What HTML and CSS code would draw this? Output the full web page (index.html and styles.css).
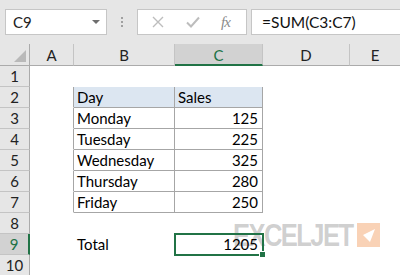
FILE: index.html
```html
<!DOCTYPE html>
<html>
<head>
<meta charset="utf-8">
<link rel="stylesheet" href="styles.css">
</head>
<body>
<div class="toolbar">
  <div class="namebox"><span class="nb-text">C9</span><span class="nb-arrow"></span></div>
  <div class="dots"><span></span><span></span><span></span></div>
  <div class="btnbox">
    <svg class="ico-x" width="12" height="12" viewBox="0 0 12 12"><path d="M1 1L11 11M11 1L1 11" stroke="#bdbdbd" stroke-width="1.4" fill="none"/></svg>
    <svg class="ico-check" width="14" height="12" viewBox="0 0 14 12"><path d="M1 6.5L5 10.5L13 1.5" stroke="#bdbdbd" stroke-width="2" fill="none"/></svg>
    <span class="fx">fx</span>
  </div>
  <div class="formula">=SUM(C3:C7)</div>
</div>
<div class="sheet">
  <div class="corner"><span class="corner-tri"></span></div>
  <div class="ch">A</div><div class="ch">B</div><div class="ch sel">C</div><div class="ch">D</div><div class="ch last">E</div>

  <div class="rh">1</div><div class="c"></div><div class="c"></div><div class="c"></div><div class="c"></div><div class="c"></div>

  <div class="rh">2</div><div class="c tb-left"></div><div class="c t hd">Day</div><div class="c t hd">Sales</div><div class="c"></div><div class="c"></div>

  <div class="rh">3</div><div class="c tb-left"></div><div class="c t">Monday</div><div class="c t num">125</div><div class="c"></div><div class="c"></div>
  <div class="rh">4</div><div class="c tb-left"></div><div class="c t">Tuesday</div><div class="c t num">225</div><div class="c"></div><div class="c"></div>
  <div class="rh">5</div><div class="c tb-left"></div><div class="c t">Wednesday</div><div class="c t num">325</div><div class="c"></div><div class="c"></div>
  <div class="rh">6</div><div class="c tb-left"></div><div class="c t">Thursday</div><div class="c t num">280</div><div class="c"></div><div class="c"></div>
  <div class="rh">7</div><div class="c tb-left"></div><div class="c t">Friday</div><div class="c t num">250</div><div class="c"></div><div class="c"></div>

  <div class="rh">8</div><div class="c"></div><div class="c"></div><div class="c"></div><div class="c"></div><div class="c"></div>

  <div class="rh sel">9</div><div class="c"></div><div class="c">Total</div><div class="c num active">1205<span class="handle"></span></div><div class="c"></div><div class="c"></div>

  <div class="rh">10</div><div class="c"></div><div class="c"></div><div class="c"></div><div class="c"></div><div class="c"></div>

  <div class="watermark"><span class="wm-text">EXCELJET</span><svg class="wm-logo" width="23" height="24" viewBox="0 0 23 24"><rect width="23" height="24" fill="#f9d2b6"/><polygon points="6,12 18,6 13,19" fill="#ffffff"/></svg></div>
</div>
</body>
</html>
```
FILE: styles.css
```css
html, body {
  margin: 0;
  padding: 0;
  background: #ffffff;
  overflow: hidden;
}
body {
  width: 400px;
  height: 275px;
  font-family: "Lato", "Liberation Sans", sans-serif;
  font-size: 15px;
  color: #000;
}
.toolbar {
  height: 44px;
  background: #e6e6e6;
  display: flex;
  align-items: flex-start;
  padding: 9px 0 0 5px;
  box-sizing: border-box;
}
.namebox {
  width: 102px;
  height: 26px;
  box-sizing: border-box;
  background: #fff;
  border: 1px solid #c6c6c6;
  display: flex;
  align-items: center;
  justify-content: space-between;
  padding: 0 6px 0 7px;
}
.nb-text { font-size: 15px; color: #222; }
.nb-arrow {
  width: 0; height: 0;
  border-left: 4px solid transparent;
  border-right: 4px solid transparent;
  border-top: 4px solid #6e6e6e;
}
.dots {
  width: 30px;
  height: 26px;
  display: flex;
  flex-direction: column;
  align-items: center;
  justify-content: center;
  gap: 2px;
}
.dots span { width: 2px; height: 2px; background: #a0a0a0; }
.btnbox {
  width: 110px;
  height: 26px;
  box-sizing: border-box;
  background: #fff;
  border: 1px solid #c6c6c6;
  display: flex;
  align-items: center;
}
.ico-x { margin-left: 14px; }
.ico-check { margin-left: 22px; }
.fx {
  margin-left: 21px;
  font-family: "Liberation Serif", serif;
  font-style: italic;
  font-size: 15px;
  color: #8a8a8a;
  letter-spacing: -1px;
}
.formula {
  flex: 1;
  margin-left: 4px;
  height: 26px;
  box-sizing: border-box;
  background: #fff;
  border: 1px solid #c6c6c6;
  border-right: none;
  padding-left: 10px;
  line-height: 24px;
  font-size: 15.5px;
  color: #111;
}
.sheet {
  display: grid;
  grid-template-columns: 30px 44px 101px 88px 87px 1fr;
  grid-template-rows: 22px repeat(10, 21px);
  position: relative;
}
.corner {
  background: #e6e6e6;
  border-right: 1px solid #ababab;
  border-bottom: 1px solid #ababab;
  position: relative;
}
.corner-tri {
  position: absolute;
  right: 3px;
  bottom: 3px;
  width: 0; height: 0;
  border-left: 12px solid transparent;
  border-bottom: 12px solid #b9b9b9;
}
.ch {
  background: #e6e6e6;
  border-right: 1px solid #c4c4c4;
  border-bottom: 1px solid #ababab;
  text-align: center;
  line-height: 22px;
  font-size: 15px;
  color: #222;
}
.ch.sel {
  background: #d2d2d2;
  border-bottom: 2px solid #217346;
  color: #217346;
}
.ch.last { border-right: none; }
.rh {
  background: #e6e6e6;
  border-right: 1px solid #ababab;
  border-bottom: 1px solid #c4c4c4;
  text-align: center;
  line-height: 21px;
  font-size: 15px;
  color: #222;
}
.rh.sel {
  background: #d2d2d2;
  border-right: 2px solid #217346;
  color: #217346;
}
.c {
  border-right: 1px solid transparent;
  border-bottom: 1px solid transparent;
  padding: 0 3px;
  line-height: 21px;
  white-space: nowrap;
  position: relative;
}
.tb-left { border-right-color: #a6a6a6; }
.t { border-right-color: #a6a6a6; border-bottom-color: #a6a6a6; }
.hd { background: #dce6f1; }
.num { text-align: right; padding-right: 4px; }
.active {
  outline: 2px solid #217346;
  outline-offset: -1px;
  z-index: 2;
}
.handle {
  position: absolute;
  right: -4px;
  bottom: -4px;
  width: 5px;
  height: 5px;
  background: #217346;
  border: 1px solid #fff;
}
.watermark {
  position: absolute;
  left: 233px;
  top: 179px;
  display: flex;
  align-items: flex-start;
  z-index: 1;
}
.wm-text {
  display: block;
  width: 120px;
  height: 30px;
  font-family: "Liberation Sans", sans-serif;
  font-weight: bold;
  font-size: 32px;
  line-height: 24px;
  letter-spacing: -2px;
  color: rgba(140,140,140,0.42);
  transform: scaleX(0.8);
  transform-origin: left top;
  white-space: nowrap;
}
.wm-logo { margin-left: 4px; }
```
